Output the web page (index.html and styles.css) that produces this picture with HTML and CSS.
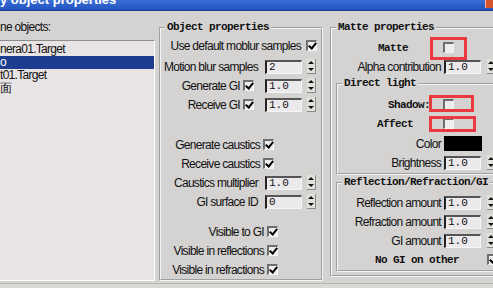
FILE: index.html
```html
<!DOCTYPE html>
<html lang="en">
<head>
  <meta charset="UTF-8">
  <meta name="viewport" content="width=device-width, initial-scale=1">
  <title>Object properties</title>
  <link rel="stylesheet" href="styles.css">
</head>
<body>
  <div class="titlebar">
    <span class="title">y object properties</span>
    <span class="close"></span>
  </div>

  <div class="main">
    <div class="objects">
      <div class="label">ne objects:</div>
      <ul class="list">
        <li>nera01.Target</li>
        <li class="sel">o</li>
        <li>t01.Target</li>
        <li>面</li>
      </ul>
    </div>

    <fieldset class="group group-mid">
      <legend>Object properties</legend>
      <div class="row r-a"><span>Use default moblur samples</span><span class="cb on"></span></div>
      <div class="row r-b gap-xs"><span>Motion blur samples</span><span class="field">2</span><span class="spin"></span></div>
      <div class="row r-b"><span>Generate GI</span><span class="cb on"></span><span class="field">1.0</span><span class="spin"></span></div>
      <div class="row r-b"><span>Receive GI</span><span class="cb on"></span><span class="field">1.0</span><span class="spin"></span></div>
      <div class="row r-c gap-l"><span>Generate caustics</span><span class="cb on"></span></div>
      <div class="row r-c"><span>Receive caustics</span><span class="cb on"></span></div>
      <div class="row r-b"><span>Caustics multiplier</span><span class="field">1.0</span><span class="spin"></span></div>
      <div class="row r-b"><span>GI surface ID</span><span class="field">0</span><span class="spin"></span></div>
      <div class="row r-d gap-s"><span>Visible to GI</span><span class="cb on"></span></div>
      <div class="row r-d"><span>Visible in reflections</span><span class="cb on"></span></div>
      <div class="row r-d"><span>Visible in refractions</span><span class="cb on"></span></div>
    </fieldset>

    <fieldset class="group group-right">
      <legend>Matte properties</legend>
      <div class="rrow">
        <span class="lbl mono pr-matte">Matte</span><span class="cb"></span>
        <span class="mark mark-matte"></span>
      </div>
      <div class="rrow"><span class="lbl">Alpha contribution</span><span class="field">1.0</span><span class="spin"></span></div>

      <fieldset class="group sub sub-light">
        <legend>Direct light</legend>
        <div class="rrow">
          <span class="lbl mono pr-shadow">Shadow:</span><span class="cb"></span>
          <span class="mark mark-shadow"></span>
        </div>
        <div class="rrow">
          <span class="lbl mono pr-affect">Affect</span><span class="cb"></span>
          <span class="mark mark-affect"></span>
        </div>
        <div class="rrow gap-xs"><span class="lbl">Color</span><span class="swatch"></span></div>
        <div class="rrow"><span class="lbl">Brightness</span><span class="field">1.0</span><span class="spin"></span></div>
      </fieldset>

      <fieldset class="group sub sub-refl">
        <legend>Reflection/Refraction/GI</legend>
        <div class="rrow"><span class="lbl">Reflection amount</span><span class="field">1.0</span><span class="spin"></span></div>
        <div class="rrow"><span class="lbl">Refraction amount</span><span class="field">1.0</span><span class="spin"></span></div>
        <div class="rrow"><span class="lbl">GI amount</span><span class="field">1.0</span><span class="spin"></span></div>
        <div class="rrow nogi"><span class="mono">No GI on other</span><span class="cb on"></span></div>
      </fieldset>
    </fieldset>
  </div>

  <div class="footer"></div>
</body>
</html>
```

FILE: styles.css
```css
body {
  margin: 0;
  width: 493px;
  height: 288px;
  overflow: hidden;
  background: #d4d3d1;
  font-family: "Liberation Sans", Arial, sans-serif;
  font-size: 12px;
  letter-spacing: -0.7px;
  color: #111;
}

/* window title */
.titlebar {
  display: flex;
  height: 10px;
  overflow: hidden;
  background: linear-gradient(#3b6fd6, #2153bf);
  border-bottom: 1px solid #163f9a;
}

.title {
  margin-top: -7px;
  font: bold 13px/13px "Liberation Sans", Arial, sans-serif;
  letter-spacing: 0;
  color: #fff;
  white-space: nowrap;
}

.close {
  margin-left: auto;
  width: 7px;
  height: 8px;
  background: #d8542c;
  border-left: 1px solid #f2b8a0;
}

.main {
  display: flex;
  align-items: flex-start;
  padding-top: 10px;
}

/* scene object list */
.objects {
  width: 155px;
  flex: none;
}

.objects .label {
  line-height: 13px;
  white-space: nowrap;
}

.list {
  list-style: none;
  margin: 6px 0 0;
  padding: 2px 0 0;
  height: 241px;
  box-sizing: border-box;
  background: #e8e4e6;
  border-top: 1px solid #8c8c8c;
  border-right: 1px solid #fff;
  border-bottom: 1px solid #fff;
}

.list li {
  line-height: 13px;
  white-space: nowrap;
}

.list li.sel {
  background: #1d3d91;
  color: #fff;
}

/* group boxes */
.group {
  margin: 0;
  padding: 0;
  min-width: 0;
  box-sizing: border-box;
  border: 2px groove #f4f4f4;
}

.group legend {
  margin-left: 4px;
  padding: 0 2px;
  font: bold 11px/13px "Liberation Mono", monospace;
  letter-spacing: -0.6px;
  white-space: nowrap;
}

.group-mid {
  flex: none;
  margin-left: 4px;
  width: 164px;
  height: 260px;
  padding-top: 2px;
}

.group-right {
  flex: none;
  margin-left: 7px;
  width: 171px;
  height: 256px;
  padding-top: 4px;
}

.sub {
  margin: 1px 4px 0;
}

.sub-light {
  padding: 5px 0 1px;
}

.sub-refl {
  padding: 4px 0 1px;
}

/* rows, middle column */
.row {
  display: flex;
  align-items: center;
  justify-content: flex-end;
  height: 19px;
  white-space: nowrap;
}

.r-a { padding-right: 4px; }
.r-a .cb { margin-left: 5px; }
.r-b { padding-right: 5px; }
.r-c { padding-right: 47px; }
.r-d { padding-right: 43px; }

.gap-xs { margin-top: 1px; }
.group-mid .gap-xs { margin-top: 2px; }
.gap-l { margin-top: 21px; }
.gap-s { margin-top: 11px; }

/* rows, right column */
.rrow {
  position: relative;
  display: flex;
  align-items: center;
  height: 19px;
  white-space: nowrap;
}

.rrow .lbl {
  flex: none;
  width: 109px;
  box-sizing: border-box;
  text-align: right;
}

.sub .rrow .lbl {
  width: 103px;
}

.rrow .field { margin-left: 3px; }
.rrow .spin { margin-left: 6px; }
.rrow .cb { margin-left: 2px; }

.pr-matte { padding-right: 33px; }
.pr-shadow { padding-right: 11px; }
.pr-affect { padding-right: 28px; }

.nogi .mono { margin-left: 37px; }
.nogi .cb { margin-left: 28px; }

.mono {
  font: bold 11px "Liberation Mono", monospace;
  letter-spacing: -0.6px;
}

/* controls */
.cb {
  flex: none;
  width: 11px;
  height: 11px;
  margin-left: 3px;
  box-sizing: border-box;
  border-top: 2px solid #6e6e6e;
  border-left: 2px solid #6e6e6e;
  border-right: 1px solid #f4f4f4;
  border-bottom: 1px solid #f4f4f4;
  background: #eeedee;
}

.cb.on::after {
  content: "";
  display: block;
  width: 3px;
  height: 6px;
  margin: -1px 0 0 2px;
  border: solid #000;
  border-width: 0 2px 2px 0;
  transform: rotate(40deg);
}

.field {
  flex: none;
  width: 37px;
  height: 14px;
  margin-left: 7px;
  padding-left: 2px;
  box-sizing: border-box;
  border-top: 2px solid #555;
  border-left: 2px solid #222;
  border-right: 1px solid #f6f6f6;
  border-bottom: 1px solid #f6f6f6;
  background: #ebe9eb;
  font: 11px/11px "Liberation Mono", monospace;
  letter-spacing: 0;
}

.row .cb + .field {
  margin-left: 11px;
}

.spin {
  flex: none;
  width: 9px;
  height: 15px;
  margin-left: 5px;
  box-sizing: border-box;
  display: flex;
  flex-direction: column;
  justify-content: space-around;
  align-items: center;
  background: #e2e0dd;
  border-right: 1px solid #8a8a8a;
  border-bottom: 1px solid #8a8a8a;
}

.spin::before,
.spin::after {
  content: "";
  border-left: 3px solid transparent;
  border-right: 3px solid transparent;
}

.spin::before { border-bottom: 3px solid #111; }
.spin::after { border-top: 3px solid #111; }

.swatch {
  flex: none;
  width: 38px;
  height: 15px;
  margin-left: 3px;
  background: #000;
}

/* red annotation boxes drawn over the checkboxes */
.mark {
  position: absolute;
  box-sizing: border-box;
  border: 3px solid #e83a3f;
}

.mark-matte { left: 98px; top: -1px; width: 37px; height: 23px; }
.mark-shadow { left: 91px; top: 0; width: 45px; height: 17px; }
.mark-affect { left: 91px; top: 2px; width: 47px; height: 16px; }

.footer {
  margin-top: 2px;
  height: 10px;
  border-top: 1px solid #b4b4b4;
  background: #dad8d5;
}
```
